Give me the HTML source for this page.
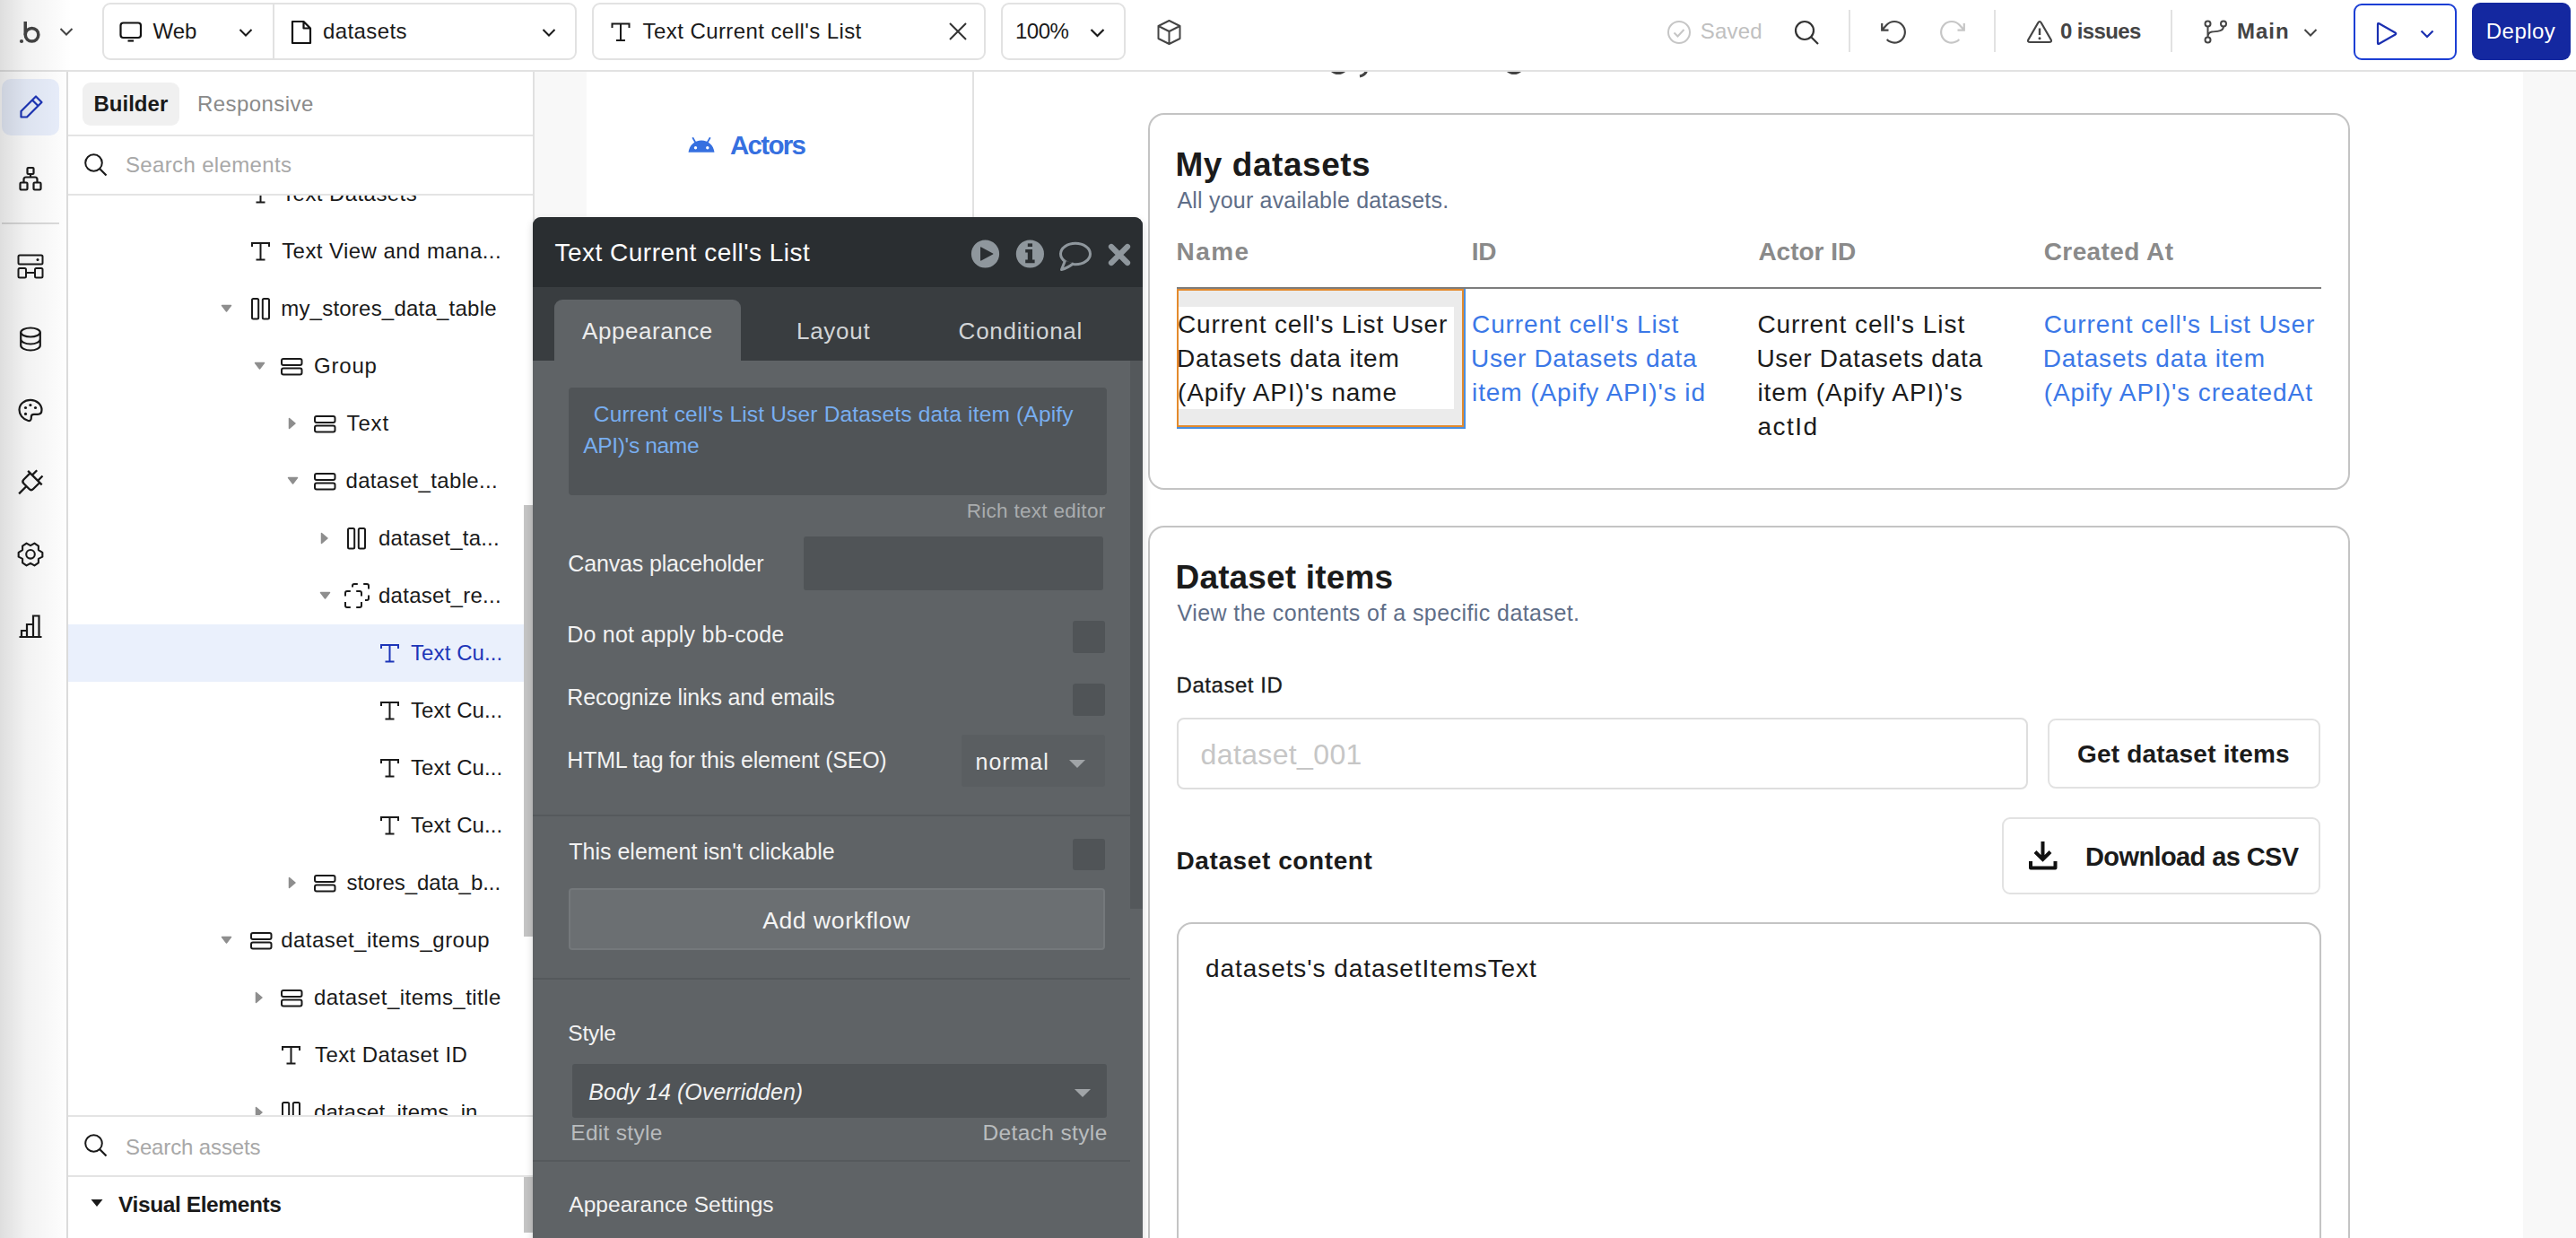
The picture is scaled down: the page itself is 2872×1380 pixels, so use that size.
<!DOCTYPE html>
<html><head><meta charset="utf-8"><title>Bubble editor</title>
<style>
html,body{margin:0;padding:0;width:2872px;height:1380px;overflow:hidden;background:#fff;position:relative;font-family:"Liberation Sans", sans-serif}
.t{position:absolute;white-space:nowrap;font-family:"Liberation Sans", sans-serif}
svg{overflow:visible}
</style></head><body>
<div style="position:absolute;left:594px;top:79px;width:2278px;height:1301px;background:#f8f8f8"></div>
<div style="position:absolute;left:654px;top:79px;width:2159px;height:1301px;background:#ffffff"></div>
<div style="position:absolute;left:1084px;top:79px;width:2px;height:1301px;background:#e2e2e2"></div>
<svg style="position:absolute;left:1480px;top:78px;" width="220" height="8" viewBox="0 0 220 8" fill="none"><path d="M4 0 Q12 7 20 0" stroke="#444" stroke-width="3"/><path d="M44 0 Q42 6 36 7" stroke="#444" stroke-width="3"/><path d="M200 0 Q208 7 216 0" stroke="#444" stroke-width="3"/></svg>
<svg style="position:absolute;left:767px;top:152px;" width="31" height="20" viewBox="0 0 31 20" fill="none"><path d="M0.5 17.8 C1.5 10 7.5 4.6 15 4.6 C22.5 4.6 28.5 10 29.5 17.8 Z" fill="#3670e0"/><path d="M8.5 7 L5.2 1.2 M21.5 7 L24.8 1.2" stroke="#3670e0" stroke-width="1.8"/><circle cx="8.5" cy="12.8" r="1.7" fill="#fff"/><circle cx="21.8" cy="12.8" r="1.7" fill="#fff"/></svg>
<div class="t" style="left:814.00px;top:146.8px;font-size:29.5px;line-height:29.5px;color:#3670e0;font-weight:700;font-style:normal;letter-spacing:-1.687px;">Actors</div>
<div style="position:absolute;left:1280px;top:126px;width:1340px;height:420px;border:2px solid #c4c4c4;border-radius:18px;box-sizing:border-box;background:#fff"></div>
<div class="t" style="left:1310.50px;top:164.7px;font-size:37px;line-height:37px;color:#1b1b1b;font-weight:700;font-style:normal;letter-spacing:0.537px;">My datasets</div>
<div class="t" style="left:1312.50px;top:211.2px;font-size:25px;line-height:25px;color:#5f6e88;font-weight:400;font-style:normal;letter-spacing:0.195px;">All your available datasets.</div>
<div class="t" style="left:1311.50px;top:267.3px;font-size:28px;line-height:28px;color:#8a8a8a;font-weight:700;font-style:normal;letter-spacing:1.437px;">Name</div>
<div class="t" style="left:1640.70px;top:267.3px;font-size:28px;line-height:28px;color:#8a8a8a;font-weight:700;font-style:normal;letter-spacing:-0.279px;">ID</div>
<div class="t" style="left:1960.40px;top:267.3px;font-size:28px;line-height:28px;color:#8a8a8a;font-weight:700;font-style:normal;letter-spacing:0.003px;">Actor ID</div>
<div class="t" style="left:2278.70px;top:267.3px;font-size:28px;line-height:28px;color:#8a8a8a;font-weight:700;font-style:normal;letter-spacing:0.415px;">Created At</div>
<div style="position:absolute;left:1312px;top:320px;width:1276px;height:2px;background:#7d7d7d"></div>
<div style="position:absolute;left:1312px;top:322px;width:321.5px;height:155.5px;border-right:2px solid #4a8fe0;border-bottom:2px solid #4a8fe0;box-sizing:border-box"></div>
<div style="position:absolute;left:1312px;top:322px;width:320px;height:154px;border:2px solid #e48a2c;box-sizing:border-box;background:#ebebeb"></div>
<div style="position:absolute;left:1314px;top:342px;width:307px;height:114px;background:#fff"></div>
<div class="t" style="left:1313.00px;top:348.0px;font-size:28px;line-height:28px;color:#1b1b1b;font-weight:400;font-style:normal;letter-spacing:0.851px;">Current cell's List User</div>
<div class="t" style="left:1312.00px;top:386.0px;font-size:28px;line-height:28px;color:#1b1b1b;font-weight:400;font-style:normal;letter-spacing:0.846px;">Datasets data item</div>
<div class="t" style="left:1313.00px;top:424.0px;font-size:28px;line-height:28px;color:#1b1b1b;font-weight:400;font-style:normal;letter-spacing:0.859px;">(Apify API)'s name</div>
<div class="t" style="left:1641.00px;top:348.0px;font-size:28px;line-height:28px;color:#3b78e7;font-weight:400;font-style:normal;letter-spacing:0.912px;">Current cell's List</div>
<div class="t" style="left:1640.00px;top:386.0px;font-size:28px;line-height:28px;color:#3b78e7;font-weight:400;font-style:normal;letter-spacing:0.700px;">User Datasets data</div>
<div class="t" style="left:1641.00px;top:424.0px;font-size:28px;line-height:28px;color:#3b78e7;font-weight:400;font-style:normal;letter-spacing:0.909px;">item (Apify API)'s id</div>
<div class="t" style="left:1959.40px;top:348.0px;font-size:28px;line-height:28px;color:#1b1b1b;font-weight:400;font-style:normal;letter-spacing:0.940px;">Current cell's List</div>
<div class="t" style="left:1958.40px;top:386.0px;font-size:28px;line-height:28px;color:#1b1b1b;font-weight:400;font-style:normal;letter-spacing:0.700px;">User Datasets data</div>
<div class="t" style="left:1959.40px;top:424.0px;font-size:28px;line-height:28px;color:#1b1b1b;font-weight:400;font-style:normal;letter-spacing:0.951px;">item (Apify API)'s</div>
<div class="t" style="left:1959.40px;top:462.0px;font-size:28px;line-height:28px;color:#1b1b1b;font-weight:400;font-style:normal;letter-spacing:1.467px;">actId</div>
<div class="t" style="left:2278.70px;top:348.0px;font-size:28px;line-height:28px;color:#3b78e7;font-weight:400;font-style:normal;letter-spacing:0.907px;">Current cell's List User</div>
<div class="t" style="left:2277.70px;top:386.0px;font-size:28px;line-height:28px;color:#3b78e7;font-weight:400;font-style:normal;letter-spacing:0.816px;">Datasets data item</div>
<div class="t" style="left:2278.70px;top:424.0px;font-size:28px;line-height:28px;color:#3b78e7;font-weight:400;font-style:normal;letter-spacing:0.909px;">(Apify API)'s createdAt</div>
<div style="position:absolute;left:1280px;top:586px;width:1340px;height:900px;border:2px solid #c4c4c4;border-radius:18px;box-sizing:border-box;background:#fff"></div>
<div class="t" style="left:1310.50px;top:624.5px;font-size:37px;line-height:37px;color:#1b1b1b;font-weight:700;font-style:normal;letter-spacing:0.164px;">Dataset items</div>
<div class="t" style="left:1312.50px;top:671.2px;font-size:25px;line-height:25px;color:#5f6e88;font-weight:400;font-style:normal;letter-spacing:0.431px;">View the contents of a specific dataset.</div>
<div class="t" style="left:1311.50px;top:751.7px;font-size:24px;line-height:24px;color:#1b1b1b;font-weight:400;font-style:normal;letter-spacing:0.550px;-webkit-text-stroke:0.3px #1b1b1b">Dataset ID</div>
<div style="position:absolute;left:1312px;top:800px;width:949px;height:80px;border:2px solid #dedede;border-radius:8px;box-sizing:border-box"></div>
<div class="t" style="left:1338.60px;top:824.7px;font-size:32px;line-height:32px;color:#c6c6c6;font-weight:400;font-style:normal;letter-spacing:0.364px;">dataset_001</div>
<div style="position:absolute;left:2283px;top:801px;width:304px;height:78px;border:2px solid #e2e2e2;border-radius:9px;box-sizing:border-box"></div>
<div class="t" style="left:2316.00px;top:827.3px;font-size:28px;line-height:28px;color:#1b1b1b;font-weight:700;font-style:normal;letter-spacing:0.197px;">Get dataset items</div>
<div class="t" style="left:1311.50px;top:946.3px;font-size:28px;line-height:28px;color:#1b1b1b;font-weight:700;font-style:normal;letter-spacing:0.592px;">Dataset content</div>
<div style="position:absolute;left:2232px;top:911px;width:355px;height:86px;border:2px solid #e2e2e2;border-radius:9px;box-sizing:border-box"></div>
<svg style="position:absolute;left:2261px;top:937px;" width="34" height="34" viewBox="0 0 34 34" fill="none"><path d="M16.5 1 V20 M8 12.5 L16.5 21 L25 12.5" stroke="#111" stroke-width="4" stroke-linecap="butt" stroke-linejoin="miter"/><path d="M3 23 V30.5 H30.5 V23" stroke="#111" stroke-width="4" stroke-linejoin="round"/></svg>
<div class="t" style="left:2325.00px;top:940.5px;font-size:29px;line-height:29px;color:#1b1b1b;font-weight:700;font-style:normal;letter-spacing:-0.607px;">Download as CSV</div>
<div style="position:absolute;left:1312px;top:1028px;width:1276px;height:500px;border:2px solid #c4c4c4;border-radius:17px;box-sizing:border-box"></div>
<div class="t" style="left:1344.00px;top:1066.3px;font-size:28px;line-height:28px;color:#1b1b1b;font-weight:400;font-style:normal;letter-spacing:0.929px;">datasets's datasetItemsText</div>
<div style="position:absolute;left:2813px;top:79px;width:59px;height:1301px;background:#f8f8f8"></div>
<div style="position:absolute;left:75px;top:79px;width:519px;height:1301px;background:#fff"></div>
<div style="position:absolute;left:594px;top:79px;width:2px;height:170px;background:#e0e0e0"></div>
<div style="position:absolute;left:92px;top:92px;width:108px;height:48px;background:#f0f0f0;border-radius:9px"></div>
<div class="t" style="left:104.50px;top:104.0px;font-size:24px;line-height:24px;color:#1a1a1a;font-weight:700;font-style:normal;letter-spacing:0.011px;">Builder</div>
<div class="t" style="left:220.00px;top:104.0px;font-size:24px;line-height:24px;color:#8a8a8a;font-weight:400;font-style:normal;letter-spacing:0.438px;">Responsive</div>
<div style="position:absolute;left:75px;top:150px;width:519px;height:2px;background:#e4e4e4"></div>
<svg style="position:absolute;left:93px;top:170px;" width="30" height="30" viewBox="0 0 30 30" fill="none"><circle cx="11.5" cy="11.5" r="9.3" stroke="#1a1a1a" stroke-width="2"/><path d="M18.3 18.3 L25.5 25.5" stroke="#1a1a1a" stroke-width="2.2"/></svg>
<div class="t" style="left:140.00px;top:171.9px;font-size:24px;line-height:24px;color:#a8a8a8;font-weight:400;font-style:normal;letter-spacing:0.350px;">Search elements</div>
<div style="position:absolute;left:75px;top:216px;width:519px;height:2px;background:#e4e4e4"></div>
<div style="position:absolute;left:75px;top:218px;width:519px;height:1026px;overflow:hidden">
<div style="position:absolute;left:0px;top:478px;width:509px;height:64px;background:#eaf0fc"></div>
<svg style="position:absolute;left:204.5px;top:-12px;" width="21" height="21" viewBox="0 0 21 21" fill="none"><path d="M1 5 V1 H20 V5 M10.5 1 V19.5 M5.5 19.5 H15.5" stroke="#1a1a1a" stroke-width="2"/></svg>
<div class="t" style="left:239.20px;top:-14.3px;font-size:24px;line-height:24px;color:#1a1a1a;font-weight:400;font-style:normal;letter-spacing:0.425px;">Text Datasets</div>
<svg style="position:absolute;left:204.5px;top:52px;" width="21" height="21" viewBox="0 0 21 21" fill="none"><path d="M1 5 V1 H20 V5 M10.5 1 V19.5 M5.5 19.5 H15.5" stroke="#1a1a1a" stroke-width="2"/></svg>
<div class="t" style="left:239.20px;top:49.7px;font-size:24px;line-height:24px;color:#1a1a1a;font-weight:400;font-style:normal;letter-spacing:0.434px;">Text View and mana...</div>
<svg style="position:absolute;left:170.5px;top:121px;" width="14" height="10" viewBox="0 0 14 10" fill="none"><path d="M1.5 1.5 H11.5 L6.5 8 Z" fill="#8e8e8e" stroke="#8e8e8e" stroke-width="1.5" stroke-linejoin="round"/></svg>
<svg style="position:absolute;left:204.5px;top:113.5px;" width="22" height="25" viewBox="0 0 22 25" fill="none"><rect x="1" y="1" width="7.2" height="22.5" rx="1.5" stroke="#1a1a1a" stroke-width="2"/><rect x="12.8" y="1" width="7.2" height="22.5" rx="1.5" stroke="#1a1a1a" stroke-width="2"/></svg>
<div class="t" style="left:238.20px;top:113.7px;font-size:24px;line-height:24px;color:#1a1a1a;font-weight:400;font-style:normal;letter-spacing:0.221px;">my_stores_data_table</div>
<svg style="position:absolute;left:207.5px;top:185px;" width="14" height="10" viewBox="0 0 14 10" fill="none"><path d="M1.5 1.5 H11.5 L6.5 8 Z" fill="#8e8e8e" stroke="#8e8e8e" stroke-width="1.5" stroke-linejoin="round"/></svg>
<svg style="position:absolute;left:238px;top:180.5px;" width="25" height="20" viewBox="0 0 25 20" fill="none"><rect x="1" y="1" width="22.5" height="7" rx="2" stroke="#1a1a1a" stroke-width="2"/><rect x="1" y="11.5" width="22.5" height="7" rx="2" stroke="#1a1a1a" stroke-width="2"/></svg>
<div class="t" style="left:275.00px;top:177.7px;font-size:24px;line-height:24px;color:#1a1a1a;font-weight:400;font-style:normal;letter-spacing:0.811px;">Group</div>
<svg style="position:absolute;left:246px;top:247px;" width="10" height="14" viewBox="0 0 10 14" fill="none"><path d="M1.5 1.5 V12.5 L8 7 Z" fill="#8e8e8e" stroke="#8e8e8e" stroke-width="1.5" stroke-linejoin="round"/></svg>
<svg style="position:absolute;left:274.5px;top:244.5px;" width="25" height="20" viewBox="0 0 25 20" fill="none"><rect x="1" y="1" width="22.5" height="7" rx="2" stroke="#1a1a1a" stroke-width="2"/><rect x="1" y="11.5" width="22.5" height="7" rx="2" stroke="#1a1a1a" stroke-width="2"/></svg>
<div class="t" style="left:311.50px;top:241.7px;font-size:24px;line-height:24px;color:#1a1a1a;font-weight:400;font-style:normal;letter-spacing:0.884px;">Text</div>
<svg style="position:absolute;left:244.5px;top:313px;" width="14" height="10" viewBox="0 0 14 10" fill="none"><path d="M1.5 1.5 H11.5 L6.5 8 Z" fill="#8e8e8e" stroke="#8e8e8e" stroke-width="1.5" stroke-linejoin="round"/></svg>
<svg style="position:absolute;left:274.5px;top:308.5px;" width="25" height="20" viewBox="0 0 25 20" fill="none"><rect x="1" y="1" width="22.5" height="7" rx="2" stroke="#1a1a1a" stroke-width="2"/><rect x="1" y="11.5" width="22.5" height="7" rx="2" stroke="#1a1a1a" stroke-width="2"/></svg>
<div class="t" style="left:310.50px;top:305.7px;font-size:24px;line-height:24px;color:#1a1a1a;font-weight:400;font-style:normal;letter-spacing:0.336px;">dataset_table...</div>
<svg style="position:absolute;left:282px;top:375px;" width="10" height="14" viewBox="0 0 10 14" fill="none"><path d="M1.5 1.5 V12.5 L8 7 Z" fill="#8e8e8e" stroke="#8e8e8e" stroke-width="1.5" stroke-linejoin="round"/></svg>
<svg style="position:absolute;left:312px;top:369.5px;" width="22" height="25" viewBox="0 0 22 25" fill="none"><rect x="1" y="1" width="7.2" height="22.5" rx="1.5" stroke="#1a1a1a" stroke-width="2"/><rect x="12.8" y="1" width="7.2" height="22.5" rx="1.5" stroke="#1a1a1a" stroke-width="2"/></svg>
<div class="t" style="left:347.00px;top:369.7px;font-size:24px;line-height:24px;color:#1a1a1a;font-weight:400;font-style:normal;letter-spacing:0.215px;">dataset_ta...</div>
<svg style="position:absolute;left:280.5px;top:441px;" width="14" height="10" viewBox="0 0 14 10" fill="none"><path d="M1.5 1.5 H11.5 L6.5 8 Z" fill="#8e8e8e" stroke="#8e8e8e" stroke-width="1.5" stroke-linejoin="round"/></svg>
<svg style="position:absolute;left:307px;top:430px;" width="32" height="32" viewBox="0 0 32 32" fill="none"><path d="M3 16.5 V13 Q3 11 5 11 H8.8 M15.2 11 H19 Q21 11 21 13 V16.6 M3 23 V27 Q3 29 5 29 H8.8 M15.2 29 H19 Q21 29 21 27 V23 M11 6.5 V5 Q11 3 13 3 H16.8 M23.2 3 H27 Q29 3 29 5 V8.6 M29 15.4 V19 Q29 21 27 21 H25" stroke="#1a1a1a" stroke-width="2"/></svg>
<div class="t" style="left:347.00px;top:433.7px;font-size:24px;line-height:24px;color:#1a1a1a;font-weight:400;font-style:normal;letter-spacing:0.271px;">dataset_re...</div>
<svg style="position:absolute;left:348.5px;top:500px;" width="21" height="21" viewBox="0 0 21 21" fill="none"><path d="M1 5 V1 H20 V5 M10.5 1 V19.5 M5.5 19.5 H15.5" stroke="#1d35b8" stroke-width="2"/></svg>
<div class="t" style="left:383.00px;top:497.7px;font-size:24px;line-height:24px;color:#1d35b8;font-weight:400;font-style:normal;letter-spacing:0.100px;">Text Cu...</div>
<svg style="position:absolute;left:348.5px;top:564px;" width="21" height="21" viewBox="0 0 21 21" fill="none"><path d="M1 5 V1 H20 V5 M10.5 1 V19.5 M5.5 19.5 H15.5" stroke="#1a1a1a" stroke-width="2"/></svg>
<div class="t" style="left:383.00px;top:561.7px;font-size:24px;line-height:24px;color:#1a1a1a;font-weight:400;font-style:normal;letter-spacing:0.100px;">Text Cu...</div>
<svg style="position:absolute;left:348.5px;top:628px;" width="21" height="21" viewBox="0 0 21 21" fill="none"><path d="M1 5 V1 H20 V5 M10.5 1 V19.5 M5.5 19.5 H15.5" stroke="#1a1a1a" stroke-width="2"/></svg>
<div class="t" style="left:383.00px;top:625.7px;font-size:24px;line-height:24px;color:#1a1a1a;font-weight:400;font-style:normal;letter-spacing:0.100px;">Text Cu...</div>
<svg style="position:absolute;left:348.5px;top:692px;" width="21" height="21" viewBox="0 0 21 21" fill="none"><path d="M1 5 V1 H20 V5 M10.5 1 V19.5 M5.5 19.5 H15.5" stroke="#1a1a1a" stroke-width="2"/></svg>
<div class="t" style="left:383.00px;top:689.7px;font-size:24px;line-height:24px;color:#1a1a1a;font-weight:400;font-style:normal;letter-spacing:0.100px;">Text Cu...</div>
<svg style="position:absolute;left:246px;top:759px;" width="10" height="14" viewBox="0 0 10 14" fill="none"><path d="M1.5 1.5 V12.5 L8 7 Z" fill="#8e8e8e" stroke="#8e8e8e" stroke-width="1.5" stroke-linejoin="round"/></svg>
<svg style="position:absolute;left:274.5px;top:756.5px;" width="25" height="20" viewBox="0 0 25 20" fill="none"><rect x="1" y="1" width="22.5" height="7" rx="2" stroke="#1a1a1a" stroke-width="2"/><rect x="1" y="11.5" width="22.5" height="7" rx="2" stroke="#1a1a1a" stroke-width="2"/></svg>
<div class="t" style="left:311.50px;top:753.7px;font-size:24px;line-height:24px;color:#1a1a1a;font-weight:400;font-style:normal;letter-spacing:-0.030px;">stores_data_b...</div>
<svg style="position:absolute;left:170.5px;top:825px;" width="14" height="10" viewBox="0 0 14 10" fill="none"><path d="M1.5 1.5 H11.5 L6.5 8 Z" fill="#8e8e8e" stroke="#8e8e8e" stroke-width="1.5" stroke-linejoin="round"/></svg>
<svg style="position:absolute;left:203.5px;top:820.5px;" width="25" height="20" viewBox="0 0 25 20" fill="none"><rect x="1" y="1" width="22.5" height="7" rx="2" stroke="#1a1a1a" stroke-width="2"/><rect x="1" y="11.5" width="22.5" height="7" rx="2" stroke="#1a1a1a" stroke-width="2"/></svg>
<div class="t" style="left:238.20px;top:817.7px;font-size:24px;line-height:24px;color:#1a1a1a;font-weight:400;font-style:normal;letter-spacing:0.456px;">dataset_items_group</div>
<svg style="position:absolute;left:209px;top:887px;" width="10" height="14" viewBox="0 0 10 14" fill="none"><path d="M1.5 1.5 V12.5 L8 7 Z" fill="#8e8e8e" stroke="#8e8e8e" stroke-width="1.5" stroke-linejoin="round"/></svg>
<svg style="position:absolute;left:238px;top:884.5px;" width="25" height="20" viewBox="0 0 25 20" fill="none"><rect x="1" y="1" width="22.5" height="7" rx="2" stroke="#1a1a1a" stroke-width="2"/><rect x="1" y="11.5" width="22.5" height="7" rx="2" stroke="#1a1a1a" stroke-width="2"/></svg>
<div class="t" style="left:275.00px;top:881.7px;font-size:24px;line-height:24px;color:#1a1a1a;font-weight:400;font-style:normal;letter-spacing:0.458px;">dataset_items_title</div>
<svg style="position:absolute;left:239px;top:948px;" width="21" height="21" viewBox="0 0 21 21" fill="none"><path d="M1 5 V1 H20 V5 M10.5 1 V19.5 M5.5 19.5 H15.5" stroke="#1a1a1a" stroke-width="2"/></svg>
<div class="t" style="left:276.00px;top:945.7px;font-size:24px;line-height:24px;color:#1a1a1a;font-weight:400;font-style:normal;letter-spacing:0.412px;">Text Dataset ID</div>
<svg style="position:absolute;left:209px;top:1015px;" width="10" height="14" viewBox="0 0 10 14" fill="none"><path d="M1.5 1.5 V12.5 L8 7 Z" fill="#8e8e8e" stroke="#8e8e8e" stroke-width="1.5" stroke-linejoin="round"/></svg>
<svg style="position:absolute;left:239px;top:1009.5px;" width="22" height="25" viewBox="0 0 22 25" fill="none"><rect x="1" y="1" width="7.2" height="22.5" rx="1.5" stroke="#1a1a1a" stroke-width="2"/><rect x="12.8" y="1" width="7.2" height="22.5" rx="1.5" stroke="#1a1a1a" stroke-width="2"/></svg>
<div class="t" style="left:275.00px;top:1009.7px;font-size:24px;line-height:24px;color:#1a1a1a;font-weight:400;font-style:normal;letter-spacing:0.068px;">dataset_items_in...</div>
</div>
<div style="position:absolute;left:584px;top:563px;width:10px;height:481px;background:#c4c4c4"></div>
<div style="position:absolute;left:75px;top:1243px;width:519px;height:2px;background:#e4e4e4"></div>
<svg style="position:absolute;left:93px;top:1263px;" width="30" height="30" viewBox="0 0 30 30" fill="none"><circle cx="11.5" cy="11.5" r="9.3" stroke="#1a1a1a" stroke-width="2"/><path d="M18.3 18.3 L25.5 25.5" stroke="#1a1a1a" stroke-width="2.2"/></svg>
<div class="t" style="left:140.00px;top:1267.1px;font-size:24px;line-height:24px;color:#a8a8a8;font-weight:400;font-style:normal;letter-spacing:-0.123px;">Search assets</div>
<div style="position:absolute;left:75px;top:1310px;width:519px;height:2px;background:#e4e4e4"></div>
<svg style="position:absolute;left:101px;top:1336px;" width="14" height="10" viewBox="0 0 14 10" fill="none"><path d="M0.5 1 H13.5 L7 9 Z" fill="#1a1a1a"/></svg>
<div class="t" style="left:132.00px;top:1331.3px;font-size:24.5px;line-height:24.5px;color:#1a1a1a;font-weight:700;font-style:normal;letter-spacing:-0.396px;">Visual Elements</div>
<div style="position:absolute;left:584px;top:1312px;width:10px;height:62px;background:#c4c4c4"></div>
<div style="position:absolute;left:0px;top:79px;width:74px;height:1301px;background:#ffffff"></div>
<div style="position:absolute;left:74px;top:79px;width:2px;height:1301px;background:#dcdcdc"></div>
<div style="position:absolute;left:2px;top:88px;width:64px;height:63px;background:#e9effc;border-radius:10px"></div>
<svg style="position:absolute;left:21px;top:105px;" width="28" height="28" viewBox="0 0 28 28" fill="none"><path d="M19 2.5 L25.5 9 L9 25.5 H2.5 V19 Z M15 6.5 L21.5 13" stroke="#1d35b8" stroke-width="2.2" stroke-linejoin="round"/></svg>
<svg style="position:absolute;left:20px;top:186px;" width="28" height="28" viewBox="0 0 28 28" fill="none"><rect x="10.5" y="1" width="7" height="7" rx="1" stroke="#1a1a1a" stroke-width="2.2"/><path d="M14 8 V11.5 M6.5 17.5 V14 Q6.5 11.5 9 11.5 H19 Q21.5 11.5 21.5 14 V17.5" stroke="#1a1a1a" stroke-width="2.2"/><rect x="2.5" y="17.5" width="8" height="8" rx="1.2" stroke="#1a1a1a" stroke-width="2.2"/><rect x="17.5" y="17.5" width="8" height="8" rx="1.2" stroke="#1a1a1a" stroke-width="2.2"/></svg>
<div style="position:absolute;left:2px;top:248px;width:64px;height:2px;background:#dcdcdc"></div>
<svg style="position:absolute;left:19px;top:283px;" width="30" height="28" viewBox="0 0 30 28" fill="none"><rect x="1.5" y="1.5" width="27" height="10" rx="1.5" stroke="#1a1a1a" stroke-width="2"/><circle cx="23" cy="6.5" r="1.5" fill="#1a1a1a"/><rect x="1.5" y="16" width="8.5" height="10.5" rx="1.5" stroke="#1a1a1a" stroke-width="2"/><rect x="20" y="16" width="8.5" height="10.5" rx="1.5" stroke="#1a1a1a" stroke-width="2"/><path d="M10 21 H20" stroke="#1a1a1a" stroke-width="2"/></svg>
<svg style="position:absolute;left:20px;top:364px;" width="28" height="28" viewBox="0 0 28 28" fill="none"><ellipse cx="14" cy="6.5" rx="10.8" ry="5" stroke="#1a1a1a" stroke-width="2.2"/><path d="M3.2 6.5 V21 C3.2 24 8 26.5 14 26.5 C20 26.5 24.8 24 24.8 21 V6.5 M3.2 14 C3.2 17 8 19.5 14 19.5 C20 19.5 24.8 17 24.8 14" stroke="#1a1a1a" stroke-width="2.2"/></svg>
<svg style="position:absolute;left:20px;top:444px;" width="28" height="28" viewBox="0 0 28 28" fill="none"><path d="M11.5 25 C5 23.2 1.5 18 1.5 12.8 C1.5 6.6 7 1.8 14 1.8 C21 1.8 26.5 6.8 26.5 13 C26.5 16 24.8 17.8 22 17.8 H17.8 C16 17.8 14.8 19 14.8 20.8 V22 C14.8 24 13.5 25.5 11.5 25 Z" stroke="#1a1a1a" stroke-width="2.2"/><circle cx="8.5" cy="10.5" r="1.6" fill="#1a1a1a"/><circle cx="13.9" cy="7.5" r="1.6" fill="#1a1a1a"/><circle cx="19.5" cy="10.5" r="1.6" fill="#1a1a1a"/><circle cx="8.5" cy="17.4" r="1.6" fill="#1a1a1a"/></svg>
<svg style="position:absolute;left:20px;top:522px;" width="30" height="30" viewBox="0 0 30 30" fill="none"><g transform="translate(14.2 15.35) rotate(45)"><path d="M-11 -6.65 H11 M-7.5 -6.65 V3.4 Q-7.5 6.65 -4.25 6.65 H4.25 Q7.5 6.65 7.5 3.4 V-6.65 M-4.3 -6.65 V-14.2 M4.6 -6.65 V-14.2 M0 6.65 V18.5" stroke="#1a1a1a" stroke-width="2.3" stroke-linejoin="round"/></g></svg>
<svg style="position:absolute;left:20px;top:604px;" width="28" height="28" viewBox="0 0 28 28" fill="none"><path d="M0.67 11.78 L5.11 9.11 L5.11 4.67 L9.56 1.56 L14.00 4.22 L18.44 1.56 L22.89 4.67 L22.89 9.11 L27.33 11.78 L27.33 16.67 L22.89 18.89 L22.89 23.33 L18.44 26.44 L14.00 23.78 L9.56 26.44 L5.11 23.33 L5.11 18.89 L0.67 16.67 Z" stroke="#1a1a1a" stroke-width="2.1" stroke-linejoin="round"/><circle cx="14" cy="13.8" r="4.8" stroke="#1a1a1a" stroke-width="2.1"/></svg>
<svg style="position:absolute;left:20px;top:684px;" width="28" height="28" viewBox="0 0 28 28" fill="none"><path d="M1.5 26 H26.5 M4 26 V19 H10 V26 M10 26 V12 H17 V26 M17 26 V2.5 H23.5 V26" stroke="#1a1a1a" stroke-width="2.2"/></svg>
<div style="position:absolute;left:0px;top:0px;width:2872px;height:78px;background:#fff"></div>
<div style="position:absolute;left:0px;top:78px;width:2872px;height:2px;background:#e2e2e2"></div>
<svg style="position:absolute;left:20px;top:22px;" width="28" height="28" viewBox="0 0 28 28" fill="none"><circle cx="4" cy="24" r="2.1" fill="#444"/><path d="M8.25 2 V16.75" stroke="#444" stroke-width="3.5"/><circle cx="15.55" cy="16.75" r="7.3" stroke="#444" stroke-width="3.5"/></svg>
<svg style="position:absolute;left:66px;top:30px;" width="16" height="11" viewBox="0 0 16 11" fill="none"><path d="M1.5 2 L8 8.5 L14.5 2" stroke="#444" stroke-width="2"/></svg>
<div style="position:absolute;left:114px;top:3px;width:529px;height:64px;border:2px solid #e2e2e2;border-radius:9px;box-sizing:border-box"></div>
<div style="position:absolute;left:304px;top:3px;width:2px;height:64px;background:#e2e2e2"></div>
<svg style="position:absolute;left:133px;top:24px;" width="26" height="24" viewBox="0 0 26 24" fill="none"><rect x="1.5" y="1.5" width="22.5" height="16.5" rx="3" stroke="#111" stroke-width="2.2"/><path d="M9.5 21.5 H16" stroke="#111" stroke-width="2.2"/></svg>
<div class="t" style="left:170.60px;top:22.6px;font-size:24px;line-height:24px;color:#1a1a1a;font-weight:400;font-style:normal;letter-spacing:-0.133px;">Web</div>
<svg style="position:absolute;left:266px;top:31px;" width="16" height="11" viewBox="0 0 16 11" fill="none"><path d="M1.5 2 L8 8.5 L14.5 2" stroke="#1a1a1a" stroke-width="2"/></svg>
<svg style="position:absolute;left:324px;top:22px;" width="24" height="28" viewBox="0 0 24 28" fill="none"><path d="M2 2 H14.5 L22 9.5 V26 H2 Z M14.5 2 V9.5 H22" stroke="#111" stroke-width="2.2" stroke-linejoin="round"/></svg>
<div class="t" style="left:360.10px;top:23.2px;font-size:24px;line-height:24px;color:#1a1a1a;font-weight:400;font-style:normal;letter-spacing:0.382px;">datasets</div>
<svg style="position:absolute;left:604px;top:31px;" width="16" height="11" viewBox="0 0 16 11" fill="none"><path d="M1.5 2 L8 8.5 L14.5 2" stroke="#1a1a1a" stroke-width="2"/></svg>
<div style="position:absolute;left:660px;top:3px;width:439px;height:64px;border:2px solid #e2e2e2;border-radius:9px;box-sizing:border-box"></div>
<svg style="position:absolute;left:681px;top:25px;" width="22" height="22" viewBox="0 0 22 22" fill="none"><path d="M1.5 6 V1.5 H20.5 V6 M11 1.5 V20 M6 20 H16" stroke="#1a1a1a" stroke-width="2"/></svg>
<div class="t" style="left:716.60px;top:23.2px;font-size:24px;line-height:24px;color:#1a1a1a;font-weight:400;font-style:normal;letter-spacing:0.421px;">Text Current cell's List</div>
<svg style="position:absolute;left:1057px;top:24px;" width="22" height="22" viewBox="0 0 22 22" fill="none"><path d="M2 2 L20 20 M20 2 L2 20" stroke="#333" stroke-width="2"/></svg>
<div style="position:absolute;left:1116px;top:3px;width:139px;height:64px;border:2px solid #e2e2e2;border-radius:9px;box-sizing:border-box"></div>
<div class="t" style="left:1132.00px;top:23.2px;font-size:24px;line-height:24px;color:#1a1a1a;font-weight:400;font-style:normal;letter-spacing:-0.481px;">100%</div>
<svg style="position:absolute;left:1215px;top:31px;" width="17" height="11" viewBox="0 0 17 11" fill="none"><path d="M1.5 2 L8.5 9 L15.5 2" stroke="#1a1a1a" stroke-width="2.2"/></svg>
<svg style="position:absolute;left:1289px;top:21px;" width="29" height="30" viewBox="0 0 29 30" fill="none"><path d="M14.5 2 L26.5 8 V22 L14.5 28 L2.5 22 V8 Z M2.5 8 L14.5 14 L26.5 8 M14.5 14 V28" stroke="#444" stroke-width="2" stroke-linejoin="round"/></svg>
<svg style="position:absolute;left:1858px;top:22px;" width="28" height="28" viewBox="0 0 28 28" fill="none"><circle cx="14" cy="14" r="12" stroke="#c6c6c6" stroke-width="2"/><path d="M8.5 14.5 L12.5 18.5 L19.5 11" stroke="#c6c6c6" stroke-width="2"/></svg>
<div class="t" style="left:1895.80px;top:23.2px;font-size:24px;line-height:24px;color:#c0c0c0;font-weight:400;font-style:normal;letter-spacing:0.174px;">Saved</div>
<svg style="position:absolute;left:2000px;top:22px;" width="29" height="29" viewBox="0 0 29 29" fill="none"><circle cx="12" cy="12" r="10" stroke="#333" stroke-width="2.2"/><path d="M19.5 19.5 L27 27" stroke="#333" stroke-width="2.2"/></svg>
<div style="position:absolute;left:2061px;top:11px;width:2px;height:47px;background:#e2e2e2"></div>
<svg style="position:absolute;left:2094px;top:20px;" width="32" height="32" viewBox="0 0 32 32" fill="none"><path d="M4.2 6 V13.6 H11.5 M4.2 13.6 L9.7 7.5 A11.8 11.8 0 1 1 9.7 24.1" stroke="#444" stroke-width="2.2"/></svg>
<svg style="position:absolute;left:2161.6px;top:20px;" width="32" height="32" viewBox="0 0 32 32" fill="none"><path d="M27.8 6 V13.6 H20.5 M27.8 13.6 L22.3 7.5 A11.8 11.8 0 1 0 22.3 24.1" stroke="#c6c6c6" stroke-width="2.2"/></svg>
<div style="position:absolute;left:2223px;top:11px;width:2px;height:47px;background:#e2e2e2"></div>
<svg style="position:absolute;left:2258px;top:21px;" width="32" height="29" viewBox="0 0 32 29" fill="none"><path d="M14.2 4.5 Q16 1.5 17.8 4.5 L28.5 23 Q30 26 26.5 26 H5.5 Q2 26 3.5 23 Z" stroke="#444" stroke-width="2.2" stroke-linejoin="round"/><path d="M16 10.5 V18" stroke="#444" stroke-width="2.4"/><circle cx="16" cy="21.8" r="1.5" fill="#444"/></svg>
<div class="t" style="left:2297.00px;top:23.2px;font-size:24px;line-height:24px;color:#444;font-weight:700;font-style:normal;letter-spacing:-0.627px;">0 issues</div>
<div style="position:absolute;left:2420px;top:11px;width:2px;height:47px;background:#e2e2e2"></div>
<svg style="position:absolute;left:2457px;top:22px;" width="27" height="27" viewBox="0 0 27 27" fill="none"><circle cx="4.5" cy="4.5" r="3" stroke="#444" stroke-width="2"/><circle cx="22" cy="4.5" r="3" stroke="#444" stroke-width="2"/><circle cx="4.5" cy="22.5" r="3" stroke="#444" stroke-width="2"/><path d="M4.5 7.5 V19.5 M22 7.5 C22 13 15 13 9 13.5 C6 14 4.5 16 4.5 19.5" stroke="#444" stroke-width="2"/></svg>
<div class="t" style="left:2494.00px;top:22.7px;font-size:24px;line-height:24px;color:#444;font-weight:700;font-style:normal;letter-spacing:0.997px;">Main</div>
<svg style="position:absolute;left:2568px;top:31px;" width="16" height="11" viewBox="0 0 16 11" fill="none"><path d="M1.5 2 L8 8.5 L14.5 2" stroke="#444" stroke-width="2"/></svg>
<div style="position:absolute;left:2624px;top:4px;width:115px;height:63px;border:2.5px solid #1c3fd4;border-radius:9px;box-sizing:border-box"></div>
<svg style="position:absolute;left:2648px;top:24px;" width="26" height="28" viewBox="0 0 26 28" fill="none"><path d="M3 3 Q3 1.5 4.5 2.3 L22.5 12.5 Q24 13.5 22.5 14.5 L4.5 24.7 Q3 25.5 3 24 Z" stroke="#1a2fb0" stroke-width="2.2" stroke-linejoin="round"/></svg>
<svg style="position:absolute;left:2698px;top:33px;" width="16" height="10" viewBox="0 0 16 10" fill="none"><path d="M1.5 1.5 L8 8 L14.5 1.5" stroke="#1a2fb0" stroke-width="2.2"/></svg>
<div style="position:absolute;left:2756px;top:3px;width:110px;height:64px;background:#1428a0;border-radius:9px"></div>
<div class="t" style="left:2771.80px;top:22.7px;font-size:24px;line-height:24px;color:#ffffff;font-weight:400;font-style:normal;letter-spacing:0.459px;">Deploy</div>
<div style="position:absolute;left:594px;top:242px;width:680px;height:1200px;background:#5f6366;border-radius:9px 9px 0 0;box-shadow:0 4px 10px rgba(0,0,0,0.17)"></div>
<div style="position:absolute;left:594px;top:242px;width:680px;height:78px;background:#2a2e31;border-radius:9px 9px 0 0"></div>
<div class="t" style="left:618.50px;top:268.3px;font-size:28px;line-height:28px;color:#ffffff;font-weight:400;font-style:normal;letter-spacing:0.491px;">Text Current cell's List</div>
<svg style="position:absolute;left:1082px;top:267px;" width="34" height="34" viewBox="0 0 34 34" fill="none"><circle cx="16.5" cy="16" r="15.6" fill="#8f979d"/><path d="M11 9 Q11 8 12 8.5 L25 15.5 Q26 16 25 16.5 L12 23.5 Q11 24 11 23 Z" fill="#2a2e31"/></svg>
<svg style="position:absolute;left:1132px;top:267px;" width="34" height="34" viewBox="0 0 34 34" fill="none"><circle cx="16.4" cy="16" r="15.6" fill="#8f979d"/><rect x="13.8" y="4.4" width="5.2" height="3.6" fill="#2a2e31"/><path d="M11.2 11 H19 V22.5 H21.6 V26.2 H11.2 V22.5 H13.8 V14.6 H11.2 Z" fill="#2a2e31"/></svg>
<svg style="position:absolute;left:1178px;top:266px;" width="42" height="38" viewBox="0 0 42 38" fill="none"><ellipse cx="21" cy="17" rx="16.5" ry="11.8" stroke="#8f979d" stroke-width="3"/><path d="M9.5 24.5 L5.5 34.5 Q12 33 19 27.5" stroke="#8f979d" stroke-width="3" fill="#2a2e31" stroke-linejoin="round"/></svg>
<svg style="position:absolute;left:1234px;top:270px;" width="28" height="28" viewBox="0 0 28 28" fill="none"><path d="M5 5 L23 23 M23 5 L5 23" stroke="#8f979d" stroke-width="6.2" stroke-linecap="round"/></svg>
<div style="position:absolute;left:594px;top:320px;width:680px;height:82px;background:#393d40"></div>
<div style="position:absolute;left:618px;top:334px;width:208px;height:68px;background:#5f6366;border-radius:9px 9px 0 0"></div>
<div class="t" style="left:649.00px;top:356.0px;font-size:26px;line-height:26px;color:#ececec;font-weight:400;font-style:normal;letter-spacing:0.560px;">Appearance</div>
<div class="t" style="left:888.00px;top:356.0px;font-size:26px;line-height:26px;color:#d2d5d7;font-weight:400;font-style:normal;letter-spacing:0.712px;">Layout</div>
<div class="t" style="left:1068.60px;top:356.0px;font-size:26px;line-height:26px;color:#d2d5d7;font-weight:400;font-style:normal;letter-spacing:0.769px;">Conditional</div>
<div style="position:absolute;left:1260px;top:402px;width:14px;height:611px;background:#54585b"></div>
<div style="position:absolute;left:634px;top:432px;width:600px;height:120px;background:#505457;border-radius:4px"></div>
<div class="t" style="left:661.80px;top:449.9px;font-size:24.5px;line-height:24.5px;color:#78aef0;font-weight:400;font-style:normal;letter-spacing:0.175px;">Current cell's List User Datasets data item (Apify</div>
<div class="t" style="left:650.30px;top:485.3px;font-size:24.5px;line-height:24.5px;color:#78aef0;font-weight:400;font-style:normal;letter-spacing:-0.344px;">API)'s name</div>
<div class="t" style="right:1639.51px;top:559.0px;font-size:22.5px;line-height:22.5px;color:#a9acae;font-weight:400;font-style:normal;letter-spacing:0.295px;">Rich text editor</div>
<div class="t" style="left:633.30px;top:615.8px;font-size:25px;line-height:25px;color:#f2f2f2;font-weight:400;font-style:normal;letter-spacing:-0.156px;">Canvas placeholder</div>
<div style="position:absolute;left:896px;top:598px;width:334px;height:60px;background:#505457;border-radius:3px"></div>
<div class="t" style="left:632.30px;top:694.8px;font-size:25px;line-height:25px;color:#f2f2f2;font-weight:400;font-style:normal;letter-spacing:0.223px;">Do not apply bb-code</div>
<div style="position:absolute;left:1196px;top:692px;width:36px;height:36px;background:#505457;border-radius:3px"></div>
<div class="t" style="left:632.30px;top:764.8px;font-size:25px;line-height:25px;color:#f2f2f2;font-weight:400;font-style:normal;letter-spacing:-0.177px;">Recognize links and emails</div>
<div style="position:absolute;left:1196px;top:762px;width:36px;height:36px;background:#505457;border-radius:3px"></div>
<div class="t" style="left:632.30px;top:835.4px;font-size:25px;line-height:25px;color:#f2f2f2;font-weight:400;font-style:normal;letter-spacing:-0.223px;">HTML tag for this element (SEO)</div>
<div style="position:absolute;left:1072px;top:819px;width:160px;height:58px;background:#5a5e61;border-radius:3px"></div>
<div class="t" style="left:1087.60px;top:836.8px;font-size:25px;line-height:25px;color:#f2f2f2;font-weight:400;font-style:normal;letter-spacing:0.948px;">normal</div>
<svg style="position:absolute;left:1191px;top:846px;" width="20" height="11" viewBox="0 0 20 11" fill="none"><path d="M1 1 H19 L10 10 Z" fill="#a0a4a7"/></svg>
<div style="position:absolute;left:594px;top:908px;width:666px;height:2px;background:#55595c"></div>
<div class="t" style="left:634.30px;top:936.5px;font-size:25px;line-height:25px;color:#f2f2f2;font-weight:400;font-style:normal;letter-spacing:-0.006px;">This element isn't clickable</div>
<div style="position:absolute;left:1196px;top:935px;width:36px;height:35px;background:#505457;border-radius:3px"></div>
<div style="position:absolute;left:634px;top:990px;width:598px;height:69px;background:#6b6f72;border:2px solid #74787b;border-radius:4px;box-sizing:border-box"></div>
<div class="t" style="left:850.20px;top:1012.6px;font-size:26.5px;line-height:26.5px;color:#f4f4f4;font-weight:400;font-style:normal;letter-spacing:0.595px;">Add workflow</div>
<div style="position:absolute;left:594px;top:1090px;width:666px;height:2px;background:#55595c"></div>
<div class="t" style="left:633.30px;top:1139.6px;font-size:24.5px;line-height:24.5px;color:#f2f2f2;font-weight:400;font-style:normal;letter-spacing:-0.210px;">Style</div>
<div style="position:absolute;left:638px;top:1186px;width:596px;height:60px;background:#505457;border-radius:3px"></div>
<div class="t" style="left:656.30px;top:1204.8px;font-size:25px;line-height:25px;color:#f2f2f2;font-weight:400;font-style:italic;letter-spacing:-0.009px;">Body 14 (Overridden)</div>
<svg style="position:absolute;left:1197px;top:1213px;" width="20" height="11" viewBox="0 0 20 11" fill="none"><path d="M1 1 H19 L10 10 Z" fill="#a0a4a7"/></svg>
<div class="t" style="left:636.30px;top:1250.8px;font-size:24.5px;line-height:24.5px;color:#b9bcbe;font-weight:400;font-style:normal;letter-spacing:0.292px;">Edit style</div>
<div class="t" style="right:1637.30px;top:1250.8px;font-size:24.5px;line-height:24.5px;color:#b9bcbe;font-weight:400;font-style:normal;letter-spacing:0.374px;">Detach style</div>
<div style="position:absolute;left:594px;top:1293px;width:666px;height:2px;background:#55595c"></div>
<div class="t" style="left:634.30px;top:1331.0px;font-size:24.5px;line-height:24.5px;color:#f2f2f2;font-weight:400;font-style:normal;letter-spacing:0.044px;">Appearance Settings</div>
<div style="position:absolute;left:0px;top:0px;width:90px;height:1380px;background:linear-gradient(to right, rgba(0,0,0,0.13), rgba(0,0,0,0.05) 30px, rgba(0,0,0,0) 80px);pointer-events:none"></div>
</body></html>
